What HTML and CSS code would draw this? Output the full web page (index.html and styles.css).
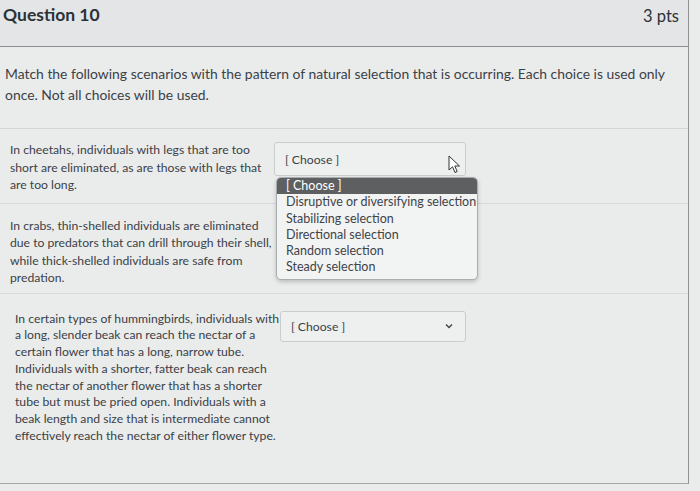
FILE: index.html
```html
<!DOCTYPE html>
<html lang="en">
<head>
  <meta charset="UTF-8">
  <meta name="viewport" content="width=device-width, initial-scale=1.0">
  <title>Question 10</title>
  <link rel="stylesheet" href="styles.css">
</head>
<body>

  <div class="question">
    <div class="question-header">
      <span class="question-name">Question 10</span>
      <span class="question-points">3 pts</span>
    </div>

    <div class="question-text">
      Match the following scenarios with the pattern of natural selection that is occurring. Each choice is used only once. Not all choices will be used.
    </div>

    <!-- matching rows -->
    <div class="match-row first">
      <div class="match-text">In cheetahs, individuals with legs that are too short are eliminated, as are those with legs that are too long.</div>
      <div class="select-wrap">
        <div class="select">[ Choose ]</div>
        <svg class="cursor" width="13" height="19" viewBox="0 0 13 19">
          <path d="M1 1 L1 15 L4.5 11.8 L7 17.5 L9.2 16.5 L6.8 11 L11.5 11 Z" fill="#fff" stroke="#333" stroke-width="1" stroke-linejoin="round"/>
        </svg>
        <ul class="dropdown">
          <li class="selected">[ Choose ]</li>
          <li>Disruptive or diversifying selection</li>
          <li>Stabilizing selection</li>
          <li>Directional selection</li>
          <li>Random selection</li>
          <li>Steady selection</li>
        </ul>
      </div>
    </div>

    <div class="match-row second">
      <div class="match-text">In crabs, thin-shelled individuals are eliminated due to predators that can drill through their shell, while thick-shelled individuals are safe from predation.</div>
      <div class="select-wrap">
        <div class="select hidden-under">[ Choose ]</div>
      </div>
    </div>

    <div class="match-row third">
      <div class="match-text">In certain types of hummingbirds, individuals with a long, slender beak can reach the nectar of a certain flower that has a long, narrow tube. Individuals with a shorter, fatter beak can reach the nectar of another flower that has a shorter tube but must be pried open. Individuals with a beak length and size that is intermediate cannot effectively reach the nectar of either flower type.</div>
      <div class="select-wrap">
        <div class="select">[ Choose ]
          <svg class="chevron" width="8" height="6" viewBox="0 0 8 6">
            <path d="M1 1.5 L4 4.5 L7 1.5" fill="none" stroke="#444" stroke-width="1.4"/>
          </svg>
        </div>
      </div>
    </div>
  </div>

</body>
</html>
```

FILE: styles.css
```css
body {
  font-family: 'Lato', 'Open Sans', sans-serif;
  margin: 0;
  padding: 0;
  background-color: #eaeceb;
  color: #3a4148;
}

.question {
  width: 689px;
  height: 484px;
  border-right: 1px solid #8e9194;
  border-bottom: 1px solid #a4a7a9;
  box-sizing: border-box;
}

.question-header {
  height: 47px;
  display: flex;
  justify-content: space-between;
  align-items: flex-start;
  padding: 4px 9px 0 3px;
  box-sizing: border-box;
  background-color: #e3e5e6;
  border-bottom: 1px solid #8c8f92;
  color: #2b3238;
}

.question-name {
  font-size: 17.5px;
  font-weight: bold;
}

.question-points {
  font-size: 16.5px;
  padding-top: 2px;
}

.question-text {
  font-size: 13.9px;
  line-height: 21px;
  padding: 16px 12px 23px 5px;
  border-bottom: 1px solid #d3d6d7;
}

.match-row {
  display: grid;
  grid-template-columns: 264px 192px;
  column-gap: 0;
  padding-left: 10px;
  border-bottom: 1px solid #d6d8d9;
  font-size: 12.2px;
}

.match-row.first {
  padding-top: 12px;
  padding-bottom: 9px;
}

.match-row.second {
  padding-top: 13px;
  padding-bottom: 6px;
}

.match-row.third {
  padding-top: 17px;
  padding-left: 15px;
  grid-template-columns: 265px 186px;
  border-bottom: none;
}

.match-text {
  line-height: 17.5px;
}

.third .match-text {
  line-height: 16.8px;
}

.select-wrap {
  position: relative;
}

.select {
  height: 34px;
  display: flex;
  align-items: center;
  justify-content: space-between;
  padding: 0 12px 0 10px;
  box-sizing: border-box;
  border: 1px solid #c9cdd0;
  border-radius: 3px;
  background-color: #eef0f0;
  color: #3a4148;
  margin-top: 1px;
}

.select.hidden-under {
  visibility: hidden;
}

.third .select {
  height: 31px;
  margin-top: 0;
}

.cursor {
  position: absolute;
  left: 174px;
  top: 14px;
}

/* 열린 선택 목록 */
.dropdown {
  position: absolute;
  top: 36px;
  left: 2px;
  width: 200px;
  margin: 0;
  padding: 0 0 3px 0;
  list-style: none;
  background-color: #f2f3f3;
  border: 1px solid #a9adb0;
  border-radius: 5px;
  box-shadow: 0 2px 4px rgba(0, 0, 0, 0.2);
  z-index: 10;
  font-size: 12.5px;
  color: #3f4449;
}

.dropdown li {
  line-height: 16.3px;
  padding-left: 9px;
  white-space: nowrap;
}

.dropdown li.selected {
  background-color: #5d5f61;
  color: #fff;
  border-radius: 4px 4px 0 0;
}
```
